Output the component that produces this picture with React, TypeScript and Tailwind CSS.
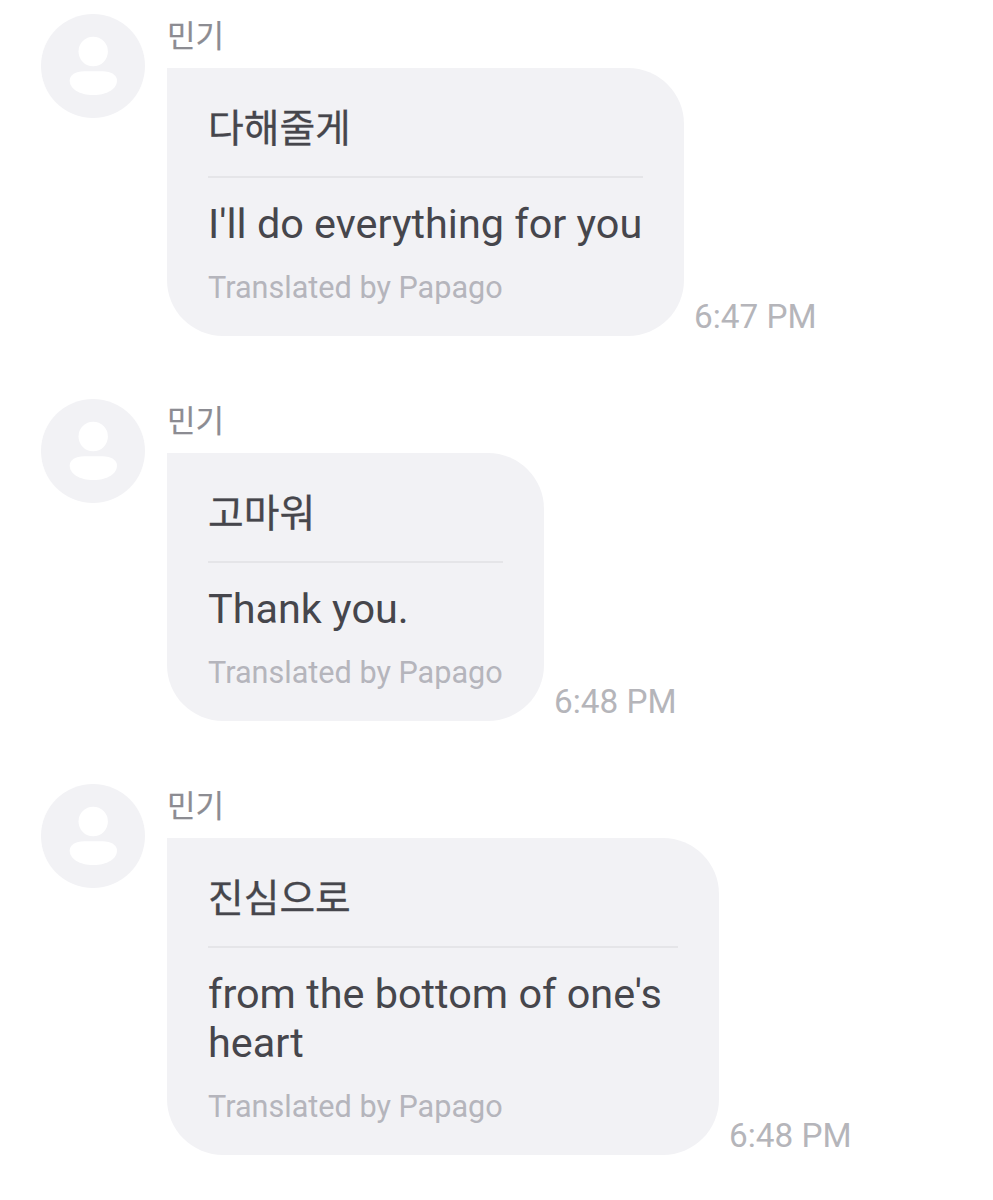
interface Message {
  id: number
  sender: string
  text: string
  translation: string
  time: string
  bubbleClass: string
}

const messages: Message[] = [
  {
    id: 1,
    sender: '민기',
    text: '다해줄게',
    translation: "I'll do everything for you",
    time: '6:47 PM',
    bubbleClass: 'w-[517px] h-[268px]',
  },
  {
    id: 2,
    sender: '민기',
    text: '고마워',
    translation: 'Thank you.',
    time: '6:48 PM',
    bubbleClass: 'w-[377px] h-[268px]',
  },
  {
    id: 3,
    sender: '민기',
    text: '진심으로',
    translation: "from the bottom of one's heart",
    time: '6:48 PM',
    bubbleClass: 'w-[552px] h-[317px]',
  },
]

function Avatar() {
  return (
    <svg className="h-[104px] w-[104px] shrink-0" viewBox="0 0 104 104" aria-hidden="true">
      <circle cx="52" cy="52" r="52" fill="#f2f2f5" />
      <circle cx="52.2" cy="37.5" r="14.7" fill="#fff" />
      <path
        d="M43 57.2H61.5C70 57.2 76 61 76 66.5C76 75 66 81 52.3 81S28.7 75 28.7 66.5C28.7 61 34.5 57.2 43 57.2Z"
        fill="#fff"
      />
    </svg>
  )
}

function MessageRow({ message }: { message: Message }) {
  return (
    <div className="flex items-start gap-[22px]">
      <Avatar />
      <div>
        <div className="h-[54px] text-[31px] leading-[45px] text-[#8c8c92] [-webkit-text-stroke:0.2px]">
          {message.sender}
        </div>
        <div className="flex items-end gap-[10px]">
          <div
            className={`rounded-[56px] rounded-tl-none bg-[#f2f2f5] pt-[36px] pr-[38px] pl-[41px] ${message.bubbleClass}`}
          >
            <p className="h-[72px] text-[38.8px] leading-[50px] text-[#46464c] [-webkit-text-stroke:0.3px]">
              {message.text}
            </p>
            <div className="mr-[3px] h-[2px] bg-[#e5e5e8]" />
            <p className="pt-[22px] text-[41.4px] leading-[49px] text-[#46464c]">{message.translation}</p>
            <p className="pt-[21px] text-[30.6px] leading-[36px] whitespace-nowrap text-[#b5b5bc]">
              Translated by Papago
            </p>
          </div>
          <time className="text-[33.3px] leading-[38px] text-[#b5b5ba]">{message.time}</time>
        </div>
      </div>
    </div>
  )
}

export default function App() {
  return (
    <main className="flex h-[1200px] w-[993px] flex-col gap-[63px] overflow-hidden bg-white pt-[14px] pl-[41px] font-['Roboto','Noto_Sans_CJK_KR',sans-serif]">
      {messages.map((message) => (
        <MessageRow key={message.id} message={message} />
      ))}
    </main>
  )
}
